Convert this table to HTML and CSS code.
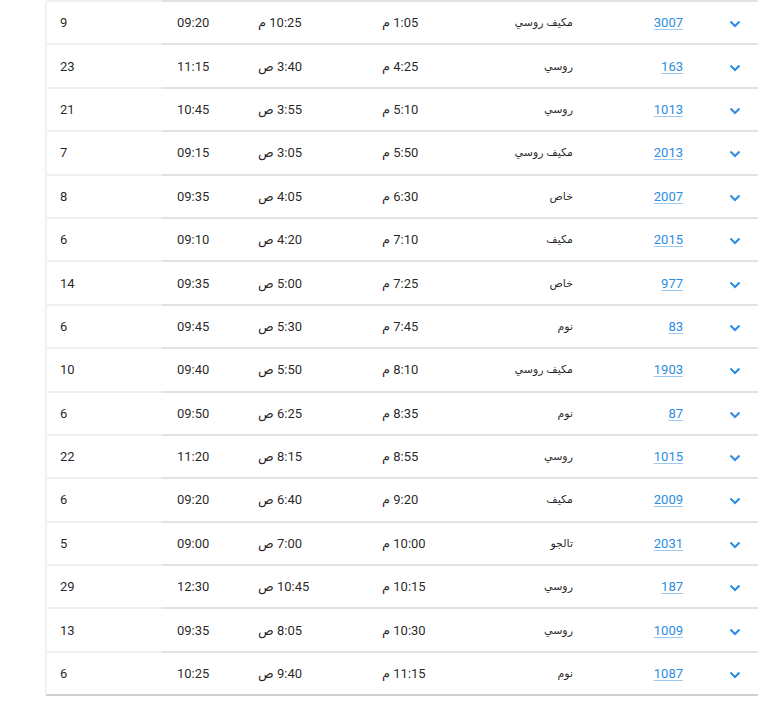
FILE: index.html
```html
<!DOCTYPE html>
<html lang="ar">
<head>
<meta charset="utf-8">
<link rel="stylesheet" href="styles.css">
</head>
<body>
<div class="card">
  <div class="row"><div class="c seats">9</div><div class="c dur">09:20</div><div class="c t" dir="rtl">10:25 م</div><div class="c t" dir="rtl">1:05 م</div><div class="c type" dir="rtl">مكيف روسي</div><div class="c id"><a href="#">3007</a></div><div class="c exp"><svg width="12" height="8" viewBox="0 0 12 8"><path d="M1.5 1.5 6 6l4.5-4.5"/></svg></div></div>
  <div class="row"><div class="c seats">23</div><div class="c dur">11:15</div><div class="c t" dir="rtl">3:40 ص</div><div class="c t" dir="rtl">4:25 م</div><div class="c type" dir="rtl">روسي</div><div class="c id"><a href="#">163</a></div><div class="c exp"><svg width="12" height="8" viewBox="0 0 12 8"><path d="M1.5 1.5 6 6l4.5-4.5"/></svg></div></div>
  <div class="row"><div class="c seats">21</div><div class="c dur">10:45</div><div class="c t" dir="rtl">3:55 ص</div><div class="c t" dir="rtl">5:10 م</div><div class="c type" dir="rtl">روسي</div><div class="c id"><a href="#">1013</a></div><div class="c exp"><svg width="12" height="8" viewBox="0 0 12 8"><path d="M1.5 1.5 6 6l4.5-4.5"/></svg></div></div>
  <div class="row"><div class="c seats">7</div><div class="c dur">09:15</div><div class="c t" dir="rtl">3:05 ص</div><div class="c t" dir="rtl">5:50 م</div><div class="c type" dir="rtl">مكيف روسي</div><div class="c id"><a href="#">2013</a></div><div class="c exp"><svg width="12" height="8" viewBox="0 0 12 8"><path d="M1.5 1.5 6 6l4.5-4.5"/></svg></div></div>
  <div class="row"><div class="c seats">8</div><div class="c dur">09:35</div><div class="c t" dir="rtl">4:05 ص</div><div class="c t" dir="rtl">6:30 م</div><div class="c type" dir="rtl">خاص</div><div class="c id"><a href="#">2007</a></div><div class="c exp"><svg width="12" height="8" viewBox="0 0 12 8"><path d="M1.5 1.5 6 6l4.5-4.5"/></svg></div></div>
  <div class="row"><div class="c seats">6</div><div class="c dur">09:10</div><div class="c t" dir="rtl">4:20 ص</div><div class="c t" dir="rtl">7:10 م</div><div class="c type" dir="rtl">مكيف</div><div class="c id"><a href="#">2015</a></div><div class="c exp"><svg width="12" height="8" viewBox="0 0 12 8"><path d="M1.5 1.5 6 6l4.5-4.5"/></svg></div></div>
  <div class="row"><div class="c seats">14</div><div class="c dur">09:35</div><div class="c t" dir="rtl">5:00 ص</div><div class="c t" dir="rtl">7:25 م</div><div class="c type" dir="rtl">خاص</div><div class="c id"><a href="#">977</a></div><div class="c exp"><svg width="12" height="8" viewBox="0 0 12 8"><path d="M1.5 1.5 6 6l4.5-4.5"/></svg></div></div>
  <div class="row"><div class="c seats">6</div><div class="c dur">09:45</div><div class="c t" dir="rtl">5:30 ص</div><div class="c t" dir="rtl">7:45 م</div><div class="c type" dir="rtl">نوم</div><div class="c id"><a href="#">83</a></div><div class="c exp"><svg width="12" height="8" viewBox="0 0 12 8"><path d="M1.5 1.5 6 6l4.5-4.5"/></svg></div></div>
  <div class="row"><div class="c seats">10</div><div class="c dur">09:40</div><div class="c t" dir="rtl">5:50 ص</div><div class="c t" dir="rtl">8:10 م</div><div class="c type" dir="rtl">مكيف روسي</div><div class="c id"><a href="#">1903</a></div><div class="c exp"><svg width="12" height="8" viewBox="0 0 12 8"><path d="M1.5 1.5 6 6l4.5-4.5"/></svg></div></div>
  <div class="row"><div class="c seats">6</div><div class="c dur">09:50</div><div class="c t" dir="rtl">6:25 ص</div><div class="c t" dir="rtl">8:35 م</div><div class="c type" dir="rtl">نوم</div><div class="c id"><a href="#">87</a></div><div class="c exp"><svg width="12" height="8" viewBox="0 0 12 8"><path d="M1.5 1.5 6 6l4.5-4.5"/></svg></div></div>
  <div class="row"><div class="c seats">22</div><div class="c dur">11:20</div><div class="c t" dir="rtl">8:15 ص</div><div class="c t" dir="rtl">8:55 م</div><div class="c type" dir="rtl">روسي</div><div class="c id"><a href="#">1015</a></div><div class="c exp"><svg width="12" height="8" viewBox="0 0 12 8"><path d="M1.5 1.5 6 6l4.5-4.5"/></svg></div></div>
  <div class="row"><div class="c seats">6</div><div class="c dur">09:20</div><div class="c t" dir="rtl">6:40 ص</div><div class="c t" dir="rtl">9:20 م</div><div class="c type" dir="rtl">مكيف</div><div class="c id"><a href="#">2009</a></div><div class="c exp"><svg width="12" height="8" viewBox="0 0 12 8"><path d="M1.5 1.5 6 6l4.5-4.5"/></svg></div></div>
  <div class="row"><div class="c seats">5</div><div class="c dur">09:00</div><div class="c t" dir="rtl">7:00 ص</div><div class="c t" dir="rtl">10:00 م</div><div class="c type" dir="rtl">تالجو</div><div class="c id"><a href="#">2031</a></div><div class="c exp"><svg width="12" height="8" viewBox="0 0 12 8"><path d="M1.5 1.5 6 6l4.5-4.5"/></svg></div></div>
  <div class="row"><div class="c seats">29</div><div class="c dur">12:30</div><div class="c t" dir="rtl">10:45 ص</div><div class="c t" dir="rtl">10:15 م</div><div class="c type" dir="rtl">روسي</div><div class="c id"><a href="#">187</a></div><div class="c exp"><svg width="12" height="8" viewBox="0 0 12 8"><path d="M1.5 1.5 6 6l4.5-4.5"/></svg></div></div>
  <div class="row"><div class="c seats">13</div><div class="c dur">09:35</div><div class="c t" dir="rtl">8:05 ص</div><div class="c t" dir="rtl">10:30 م</div><div class="c type" dir="rtl">روسي</div><div class="c id"><a href="#">1009</a></div><div class="c exp"><svg width="12" height="8" viewBox="0 0 12 8"><path d="M1.5 1.5 6 6l4.5-4.5"/></svg></div></div>
  <div class="row"><div class="c seats">6</div><div class="c dur">10:25</div><div class="c t" dir="rtl">9:40 ص</div><div class="c t" dir="rtl">11:15 م</div><div class="c type" dir="rtl">نوم</div><div class="c id"><a href="#">1087</a></div><div class="c exp"><svg width="12" height="8" viewBox="0 0 12 8"><path d="M1.5 1.5 6 6l4.5-4.5"/></svg></div></div>
</div>
</body>
</html>
```
FILE: styles.css
```css
html, body {
  margin: 0;
  padding: 0;
  background: #fff;
  overflow: hidden;
}
body {
  font-family: Roboto, "DejaVu Sans", sans-serif;
  font-size: 13px;
  color: rgba(0, 0, 0, 0.87);
}
.card {
  margin-left: 46px;
  width: 760px;
  background: #fff;
  border-left: 1px solid #f1f1f1;
  border-bottom: 2px solid #cfcfcf;
  box-shadow: 0 1px 2px rgba(0, 0, 0, 0.18);
}
.row {
  display: grid;
  grid-template-columns: 115px 81px 124px 124px 98px 110px 1fr;
  height: 43.4px;
}
.c {
  box-sizing: border-box;
  border-top: 2px solid #e2e2e2;
  display: flex;
  align-items: center;
  white-space: nowrap;
  line-height: 16px;
  padding-top: 1px;
}
.c.seats {
  border-top-color: #efefef;
  padding-left: 13px;
}
.c.dur {
  padding-left: 15px;
}
.c.t {
  justify-content: flex-end;
  padding-left: 15px;
  font-size: 13px;
}
.c.type {
  justify-content: flex-start;
  padding-right: 16px;
  font-size: 11px;
}
.c.id {
  justify-content: flex-end;
  padding-right: 16px;
}
.c.id a {
  color: #2b8de3;
  text-decoration: underline;
  text-decoration-color: #9cc8ee;
  text-underline-offset: 2px;
}
.c.exp {
  padding-left: 30px;
}
.c.exp svg {
  display: block;
  margin-top: 2px;
}
.c.exp path {
  fill: none;
  stroke: #2b8de3;
  stroke-width: 2;
}
```
